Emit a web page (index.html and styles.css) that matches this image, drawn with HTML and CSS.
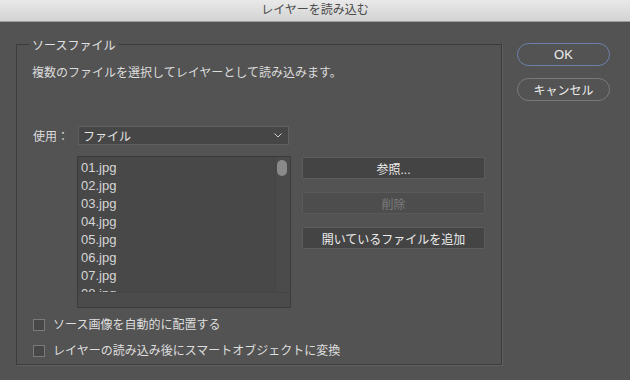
FILE: index.html
```html
<!DOCTYPE html>
<html lang="ja">
<head>
    <meta charset="UTF-8">
    <meta name="viewport" content="width=device-width, initial-scale=1.0">
    <title>レイヤーを読み込む</title>
    <link rel="stylesheet" href="styles.css">
</head>
<body>
    <div class="titlebar">レイヤーを読み込む</div>
    <div class="dialog">
        <div class="group">
            <div class="group-title">ソースファイル</div>
            <div class="desc">複数のファイルを選択してレイヤーとして読み込みます。</div>
            <div class="use-row">
                <span class="use-label">使用：</span>
                <div class="select">
                    <span>ファイル</span>
                    <svg class="chevron" width="8" height="5" viewBox="0 0 8 5">
                        <polyline points="0.5,0.5 4,4 7.5,0.5" fill="none" stroke="#d0d0d0" stroke-width="1"/>
                    </svg>
                </div>
            </div>
            <div class="files-row">
                <div class="file-list">
                    <div class="items">
                        <div>01.jpg</div>
                        <div>02.jpg</div>
                        <div>03.jpg</div>
                        <div>04.jpg</div>
                        <div>05.jpg</div>
                        <div>06.jpg</div>
                        <div>07.jpg</div>
                        <div>08.jpg</div>
                    </div>
                    <div class="v-track"><div class="thumb"></div></div>
                    <div class="h-track"></div>
                </div>
                <div class="file-buttons">
                    <button class="btn">参照...</button>
                    <button class="btn" disabled>削除</button>
                    <button class="btn">開いているファイルを追加</button>
                </div>
            </div>
            <label class="check-row"><span class="box"></span>ソース画像を自動的に配置する</label>
            <label class="check-row second"><span class="box"></span>レイヤーの読み込み後にスマートオブジェクトに変換</label>
        </div>
        <div class="side">
            <button class="pill ok">OK</button>
            <button class="pill">キャンセル</button>
        </div>
    </div>
</body>
</html>
```

FILE: styles.css
```css
body {
    font-family: 'Liberation Sans', 'Noto Sans CJK JP', sans-serif;
    font-size: 12px;
    background-color: #535353;
    color: #dcdcdc;
    margin: 0;
    padding: 0;
    width: 630px;
    height: 380px;
    overflow: hidden;
}
.titlebar {
    height: 21px;
    line-height: 21px;
    text-align: center;
    color: #4a4a4a;
    font-size: 12px;
    background: linear-gradient(#e9e9e9, #d3d3d3);
    border-bottom: 1px solid #9c9c9c;
}
.dialog {
    display: flex;
    align-items: flex-start;
    padding: 21px 0 0 16px;
}
.group {
    width: 454px;
    margin-top: 1px;
    padding: 0 15px 5px 15px;
    border: 1px solid #3c3c3c;
    box-shadow: 1px 1px 0 #5f5f5f;
}
.group-title {
    display: table;
    margin: -7px 0 0 -3px;
    padding: 0 3px;
    line-height: 16px;
    background-color: #535353;
    color: #e2e2e2;
}
.desc {
    margin-top: 11px;
    line-height: 16px;
}
.use-row {
    display: flex;
    align-items: center;
    margin-top: 45px;
    height: 19px;
}
.use-label {
    width: 46px;
    padding-left: 1px;
    box-sizing: border-box;
}
.select {
    width: 211px;
    height: 19px;
    box-sizing: border-box;
    display: flex;
    align-items: center;
    justify-content: space-between;
    padding: 0 6px 0 4px;
    background-color: #464646;
    border: 1px solid #606060;
    color: #e4e4e4;
}
.chevron {
    display: block;
}
.files-row {
    display: flex;
    margin-top: 11px;
    margin-left: 45px;
}
.file-list {
    width: 214px;
    height: 152px;
    box-sizing: border-box;
    border: 1px solid #3a3a3a;
    background-color: #484848;
    display: grid;
    grid-template-columns: 1fr 15px;
    grid-template-rows: 1fr 15px;
}
.items {
    overflow: hidden;
    padding: 2px 0 0 3px;
    line-height: 18px;
    font-size: 13px;
    color: #d6d6d6;
}
.v-track {
    background-color: #4b4b4b;
    border-left: 1px solid #454545;
}
.thumb {
    width: 10px;
    height: 16px;
    margin: 3px 0 0 1px;
    border-radius: 5px;
    background-color: #8a8a8a;
}
.h-track {
    grid-column: 1 / 3;
    background-color: #4b4b4b;
    border-top: 1px solid #454545;
}
.file-buttons {
    display: flex;
    flex-direction: column;
    gap: 13px;
    margin-left: 11px;
    padding-top: 1px;
}
.btn {
    width: 183px;
    height: 22px;
    padding: 0;
    font-family: 'Liberation Sans', 'Noto Sans CJK JP', sans-serif;
    font-size: 12px;
    color: #ececec;
    background-color: #444444;
    border: 1px solid #5c5c5c;
    border-radius: 1px;
}
.btn:disabled {
    color: #7c7c7c;
    background-color: #4d4d4d;
    border-color: #5a5a5a;
}
.check-row {
    display: flex;
    align-items: center;
    gap: 8px;
    margin-top: 9px;
    line-height: 16px;
    padding-left: 1px;
    color: #dedede;
}
.check-row.second {
    margin-top: 10px;
}
.box {
    width: 12px;
    height: 12px;
    box-sizing: border-box;
    border: 1px solid #7a7a7a;
    background-color: #474747;
}
.side {
    display: flex;
    flex-direction: column;
    gap: 12px;
    margin-left: 15px;
}
.pill {
    width: 93px;
    height: 23px;
    padding: 0;
    font-family: 'Liberation Sans', 'Noto Sans CJK JP', sans-serif;
    font-size: 12px;
    color: #ededed;
    background-color: #535353;
    border: 1px solid #7a7a7a;
    border-radius: 12px;
}
.pill.ok {
    font-size: 13px;
    border-color: #6d81ab;
}
```
